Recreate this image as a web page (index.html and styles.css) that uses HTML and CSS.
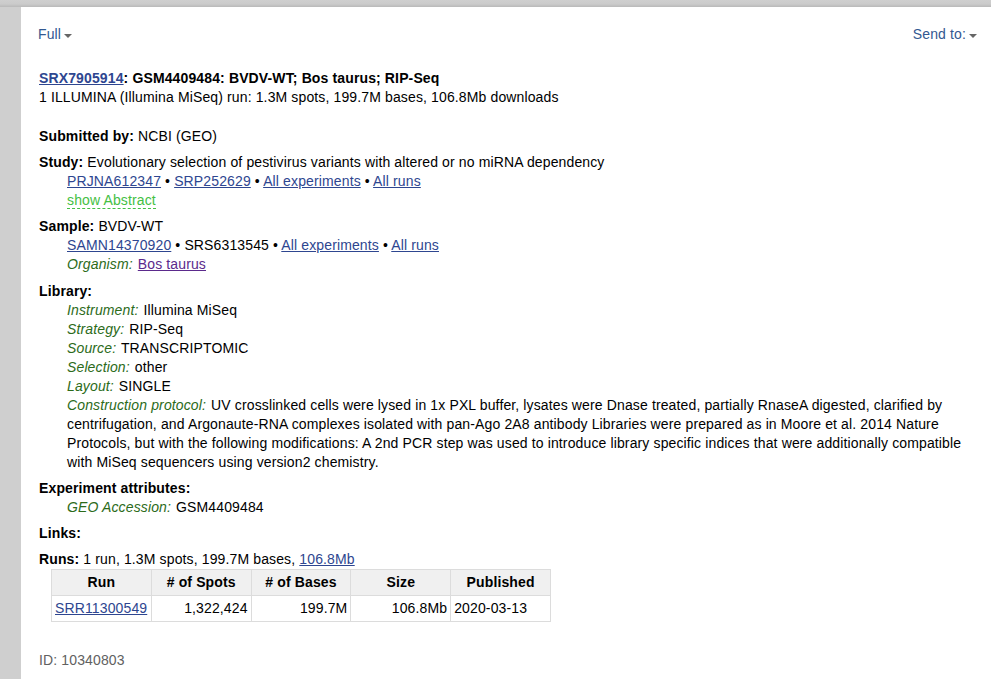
FILE: index.html
```html
<!DOCTYPE html>
<html>
<head>
<meta charset="utf-8">
<link rel="stylesheet" href="styles.css">
</head>
<body>
<div class="topbar"></div>
<div class="page">
  <div class="toolbar">
    <span class="menu">Full <span class="caret"></span></span>
    <span class="menu">Send to: <span class="caret"></span></span>
  </div>

  <div class="title"><a href="#">SRX7905914</a>: GSM4409484: BVDV-WT; Bos taurus; RIP-Seq</div>
  <div class="line">1 ILLUMINA (Illumina MiSeq) run: 1.3M spots, 199.7M bases, 106.8Mb downloads</div>

  <div class="block first">
    <div><b>Submitted by:</b> NCBI (GEO)</div>
  </div>

  <div class="block">
    <div><b>Study:</b> Evolutionary selection of pestivirus variants with altered or no miRNA dependency</div>
    <div class="sub"><a href="#">PRJNA612347</a> • <a href="#">SRP252629</a> • <a href="#">All experiments</a> • <a href="#">All runs</a></div>
    <div class="sub"><span class="abstract">show Abstract</span></div>
  </div>

  <div class="block">
    <div><b>Sample:</b> BVDV-WT</div>
    <div class="sub"><a href="#">SAMN14370920</a> • SRS6313545 • <a href="#">All experiments</a> • <a href="#">All runs</a></div>
    <div class="sub"><em>Organism:</em> <a href="#" class="visited">Bos taurus</a></div>
  </div>

  <div class="block lib">
    <div><b>Library:</b></div>
    <div class="sub"><em>Instrument:</em> Illumina MiSeq</div>
    <div class="sub"><em>Strategy:</em> RIP-Seq</div>
    <div class="sub"><em>Source:</em> TRANSCRIPTOMIC</div>
    <div class="sub"><em>Selection:</em> other</div>
    <div class="sub"><em>Layout:</em> SINGLE</div>
    <div class="sub"><em>Construction protocol:</em> UV crosslinked cells were lysed in 1x PXL buffer, lysates were Dnase treated, partially RnaseA digested, clarified by centrifugation, and Argonaute-RNA complexes isolated with pan-Ago 2A8 antibody Libraries were prepared as in Moore et al. 2014 Nature Protocols, but with the following modifications: A 2nd PCR step was used to introduce library specific indices that were additionally compatible with MiSeq sequencers using version2 chemistry.</div>
  </div>

  <div class="block">
    <div><b>Experiment attributes:</b></div>
    <div class="sub"><em>GEO Accession:</em> GSM4409484</div>
  </div>

  <div class="block">
    <div><b>Links:</b></div>
  </div>

  <div class="block">
    <div><b>Runs:</b> 1 run, 1.3M spots, 199.7M bases, <a href="#">106.8Mb</a></div>
    <table class="runs">
      <thead>
        <tr><th>Run</th><th># of Spots</th><th># of Bases</th><th>Size</th><th>Published</th></tr>
      </thead>
      <tbody>
        <tr><td><a href="#">SRR11300549</a></td><td class="num">1,322,424</td><td class="num">199.7M</td><td class="num">106.8Mb</td><td>2020-03-13</td></tr>
      </tbody>
    </table>
  </div>

  <div class="id">ID: 10340803</div>
</div>
</body>
</html>
```

FILE: styles.css
```css
html, body {
  margin: 0;
  padding: 0;
}
body {
  background: #cfcfcf;
  font-family: Arial, "Liberation Sans", sans-serif;
  font-size: 14px;
  line-height: 19px;
  letter-spacing: 0.13px;
  color: #000;
  min-height: 679px;
}
.topbar {
  height: 7px;
  background: linear-gradient(#cfcfcf 0, #cbcbcb 4px, #b9b9b9 7px);
}
.page {
  margin-left: 21px;
  background: #fff;
  padding: 18px 14px 20px 17px;
  min-height: 640px;
}
.toolbar {
  display: flex;
  justify-content: space-between;
  color: #325891;
  margin-bottom: 25px;
}
.menu {
  display: inline-flex;
  align-items: center;
}
.caret {
  display: inline-block;
  width: 0;
  height: 0;
  border-left: 4px solid transparent;
  border-right: 4px solid transparent;
  border-top: 4px solid #666;
  margin-left: 3px;
  margin-top: 2px;
}
a {
  color: #2e4690;
  text-decoration: underline;
}
a.visited {
  color: #5b2a8c;
}
.title {
  font-weight: bold;
  padding-left: 1px;
}
.line {
  padding-left: 1px;
}
.block {
  margin-top: 7px;
  padding-left: 1px;
}
.block.first {
  margin-top: 20px;
}
.block.lib {
  margin-top: 8px;
}
.sub {
  padding-left: 28px;
}
em {
  color: #2c6b1a;
  font-style: italic;
  padding-right: 1px;
}
.abstract {
  color: #44c044;
  border-bottom: 1px dashed #44c044;
}
.runs {
  border-collapse: collapse;
  margin-left: 12px;
  width: 500px;
  table-layout: fixed;
}
.runs th, .runs td {
  border: 1px solid #dcdcdc;
  padding: 3px 3px 4px;
  line-height: 18px;
}
.runs th {
  background: #f0f0f0;
  font-weight: bold;
  text-align: center;
}
.runs td {
  text-align: left;
}
.runs td.num {
  text-align: right;
}
.id {
  color: #616161;
  margin-top: 29px;
  padding-left: 1px;
}
```
